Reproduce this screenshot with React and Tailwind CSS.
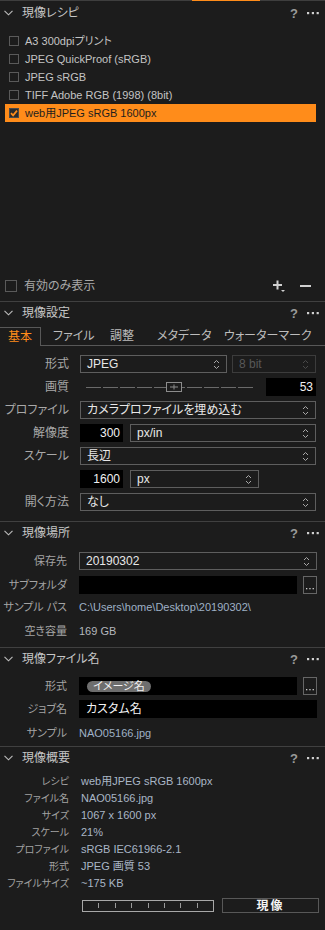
import React from "react";

const F = "font-['Liberation_Sans','Noto_Sans_CJK_JP',sans-serif] [font-feature-settings:'palt']";

function Chevron() {
  return (
    <svg width="9" height="6" viewBox="0 0 9 6" className="shrink-0">
      <polyline points="0.5,0.8 4.5,4.8 8.5,0.8" fill="none" stroke="#bdbdbd" strokeWidth="1.1" />
    </svg>
  );
}

function Dots() {
  return (
    <svg width="12" height="3" viewBox="0 0 12 3">
      <rect x="0" y="0" width="2.2" height="2.2" fill="#d0d0d0" />
      <rect x="4.8" y="0" width="2.2" height="2.2" fill="#d0d0d0" />
      <rect x="9.6" y="0" width="2.2" height="2.2" fill="#d0d0d0" />
    </svg>
  );
}

function Header({ title, tall }) {
  return (
    <div className={`flex ${tall ? "h-[24px]" : "h-[22px]"} items-center pl-[4px] pr-[6px]`}>
      <Chevron />
      <span className="ml-[9px] text-[12px] text-[#c6c6c6]">{title}</span>
      <span className="ml-auto text-[13px] font-bold leading-none text-[#9a9a9a]">?</span>
      <span className="ml-[9px] flex items-center">
        <Dots />
      </span>
    </div>
  );
}

function Divider() {
  return <div className="h-px bg-[#404040]" />;
}

function UpDown({ dim }) {
  const c = dim ? "#4a4a4a" : "#a8a8a8";
  return (
    <svg width="7" height="11" viewBox="0 0 7 11" className="ml-auto shrink-0">
      <polyline points="1,4 3.5,1.5 6,4" fill="none" stroke={c} strokeWidth="1" />
      <polyline points="1,7 3.5,9.5 6,7" fill="none" stroke={c} strokeWidth="1" />
    </svg>
  );
}

function Select({ children, className = "", dim }) {
  return (
    <div
      className={`flex h-[18px] items-center border pl-[6px] pr-[6px] text-[12px] ${
        dim ? "border-[#3c3c3c] text-[#585858]" : "border-[#5e5e5e] text-[#e8e8e8]"
      } ${className}`}
    >
      <span className="leading-none">{children}</span>
      <UpDown dim={dim} />
    </div>
  );
}

function Box({ checked, size }) {
  if (checked) {
    return (
      <div className="flex h-[10px] w-[10px] shrink-0 items-center justify-center border border-[#4a4a4a] bg-[#2b2b2b]">
        <svg width="8" height="8" viewBox="0 0 8 8">
          <path d="M1 4.2 L3.1 6.4 L7 1.6" fill="none" stroke="#ff8c1a" strokeWidth="1.7" />
        </svg>
      </div>
    );
  }
  return <div className={`${size === "lg" ? "h-[12px] w-[12px]" : "h-[10px] w-[10px]"} shrink-0 border border-[#5a5a5a]`} />;
}

function RecipeItem({ label, checked }) {
  return (
    <div
      className={`flex h-[18px] items-center pl-[4px] text-[11px] ${
        checked ? "bg-[#ff8c1a] text-[#1e1e1e]" : "text-[#c4c4c4]"
      }`}
    >
      <Box checked={checked} />
      <span className="ml-[6px] leading-none">{label}</span>
    </div>
  );
}

function SetRow({ label, children, className = "" }) {
  return (
    <div className={`flex h-[18px] items-center ${className}`}>
      <div className="w-[69px] shrink-0 text-right text-[12px] leading-none text-[#a8a8a8]">{label}</div>
      <div className="ml-[11px] flex flex-1 items-center">{children}</div>
    </div>
  );
}

function BlackInput({ children, className = "" }) {
  return (
    <div className={`flex h-[18px] items-center justify-end bg-black pr-[3px] text-[12px] leading-none text-[#f0f0f0] ${className}`}>
      {children}
    </div>
  );
}

function Slider() {
  const segs = [0, 1, 2, 3, 4, 5, 6, 7, 8, 9];
  return (
    <div className="relative ml-[6px] flex h-[18px] flex-1 items-center">
      <div className="flex w-full gap-[2px]">
        {segs.map((s) => (
          <div key={s} className="h-px flex-1 bg-[#6a6a6a]" />
        ))}
      </div>
      <div className="absolute left-[80px] top-[4px] flex h-[10px] w-[16px] items-center justify-center border border-[#8c8c8c] bg-[#1c1c1c]">
        <svg width="8" height="6" viewBox="0 0 8 6">
          <path d="M0 3 H8 M4 0.5 V5.5" stroke="#8c8c8c" strokeWidth="1" />
        </svg>
      </div>
    </div>
  );
}

function LocRow({ label, children, className = "" }) {
  return (
    <div className={`flex h-[18px] items-center ${className}`}>
      <div className="w-[67px] shrink-0 text-right text-[11px] leading-none text-[#a4a4a4]">{label}</div>
      <div className="ml-[12px] flex flex-1 items-center">{children}</div>
    </div>
  );
}

function MoreBtn() {
  return (
    <div className="ml-[6px] flex h-[18px] w-[14px] shrink-0 items-end justify-center border border-[#666] pb-[3px]">
      <svg width="8" height="2" viewBox="0 0 8 2">
        <rect x="0" y="0" width="1.3" height="1.3" fill="#cfcfcf" />
        <rect x="3.3" y="0" width="1.3" height="1.3" fill="#cfcfcf" />
        <rect x="6.6" y="0" width="1.3" height="1.3" fill="#cfcfcf" />
      </svg>
    </div>
  );
}

function SumRow({ label, value }) {
  return (
    <div className="flex h-[17px] items-center">
      <div className="w-[69px] shrink-0 text-right text-[10px] leading-none text-[#a2a2a2]">{label}</div>
      <div className="ml-[12px] text-[11px] leading-none text-[#a9b6c6]">{value}</div>
    </div>
  );
}

export default function App() {
  return (
    <div className={`h-[930px] w-[325px] overflow-hidden bg-[#1c1c1c] ${F}`}>
      <div className="flex h-px">
        <div className="w-[192px] bg-[#3e3e3e]" />
        <div className="w-[68px] bg-[#ff8c1a]" />
        <div className="flex-1 bg-[#3e3e3e]" />
      </div>

      {/* 現像レシピ */}
      <Header title="現像レシピ" tall />
      <div className="h-[252px] pl-[5px] pr-[9px] pt-[7px]">
        <RecipeItem label="A3 300dpiプリント" />
        <RecipeItem label="JPEG QuickProof (sRGB)" />
        <RecipeItem label="JPEG sRGB" />
        <RecipeItem label="TIFF Adobe RGB (1998) (8bit)" />
        <RecipeItem label="web用JPEG sRGB 1600px" checked />
      </div>
      <div className="flex h-[18px] items-center pl-[5px] pr-[14px]">
        <Box size="lg" />
        <span className="ml-[7px] text-[12px] leading-none text-[#a8a8a8]">有効のみ表示</span>
        <svg width="12" height="12" viewBox="0 0 12 12" className="ml-auto">
          <path d="M4.5 0.5 V9.5 M0 5 H9" stroke="#d0d0d0" strokeWidth="2" />
          <path d="M8 10 H12 L10 12 Z" fill="#d0d0d0" />
        </svg>
        <svg width="11" height="3" viewBox="0 0 11 3" className="ml-[15px]">
          <rect x="0" y="0" width="11" height="2" fill="#d0d0d0" />
        </svg>
      </div>
      <div className="h-[6px]" />
      <Divider />

      {/* 現像設定 */}
      <Header title="現像設定" />
      <div className="mt-[3px] flex h-[19px] text-[12px] leading-none">
        <div className="flex w-[41px] items-center justify-center border-r border-t border-[#585858] text-[#ff8c1a]">基本</div>
        <div className="flex flex-1 items-center border-b border-[#585858] text-[#bdbdbd]">
          <span className="w-[69px] pl-[12px]">ファイル</span>
          <span className="w-[47px]">調整</span>
          <span className="w-[67px]">メタデータ</span>
          <span>ウォーターマーク</span>
        </div>
      </div>
      <div className="flex flex-col gap-[5px] pr-[9px] pt-[9px]">
        <SetRow label="形式">
          <Select className="w-[147px]">JPEG</Select>
          <Select className="ml-[5px] flex-1" dim>8 bit</Select>
        </SetRow>
        <SetRow label="画質">
          <Slider />
          <BlackInput className="ml-[13px] w-[50px]">53</BlackInput>
        </SetRow>
        <SetRow label="プロファイル">
          <Select className="flex-1">カメラプロファイルを埋め込む</Select>
        </SetRow>
        <SetRow label="解像度">
          <BlackInput className="w-[43px]">300</BlackInput>
          <Select className="ml-[7px] flex-1">px/in</Select>
        </SetRow>
        <SetRow label="スケール">
          <Select className="flex-1">長辺</Select>
        </SetRow>
        <SetRow label="">
          <BlackInput className="w-[43px]">1600</BlackInput>
          <Select className="ml-[7px] w-[129px]">px</Select>
        </SetRow>
        <SetRow label="開く方法">
          <Select className="flex-1">なし</Select>
        </SetRow>
      </div>
      <div className="h-[10px]" />
      <Divider />

      {/* 現像場所 */}
      <Header title="現像場所" />
      <div className="pr-[8px] pt-[8px]">
        <LocRow label="保存先">
          <Select className="flex-1">20190302</Select>
        </LocRow>
        <LocRow label="サブフォルダ" className="mt-[6px]">
          <div className="h-[18px] flex-1 bg-black" />
          <MoreBtn />
        </LocRow>
        <LocRow label="サンプル パス" className="mt-[4px]">
          <span className="text-[11px] leading-none text-[#9fb1c6]">C:\Users\home\Desktop\20190302\</span>
        </LocRow>
        <LocRow label="空き容量" className="mt-[6px]">
          <span className="text-[11px] leading-none text-[#b4b8bd]">169 GB</span>
        </LocRow>
      </div>
      <div className="h-[7px]" />
      <Divider />

      {/* 現像ファイル名 */}
      <Header title="現像ファイル名" />
      <div className="pr-[8px] pt-[7px]">
        <LocRow label="形式">
          <div className="flex h-[18px] flex-1 items-center bg-black pl-[8px]">
            <div className="flex h-[11px] w-[64px] items-center justify-center rounded-full bg-[#6e6e6e] text-[11px] leading-none text-[#f2f2f2]">
              イメージ名
            </div>
          </div>
          <MoreBtn />
        </LocRow>
        <LocRow label="ジョブ名" className="mt-[5px]">
          <div className="flex h-[18px] flex-1 items-center bg-black pl-[7px] text-[12px] leading-none text-[#f2f2f2]">
            カスタム名
          </div>
        </LocRow>
        <LocRow label="サンプル" className="mt-[6px]">
          <span className="text-[11px] leading-none text-[#9fb1c6]">NAO05166.jpg</span>
        </LocRow>
      </div>
      <div className="h-[4px]" />
      <Divider />

      {/* 現像概要 */}
      <Header title="現像概要" />
      <div className="pt-[4px]">
        <SumRow label="レシピ" value="web用JPEG sRGB 1600px" />
        <SumRow label="ファイル名" value="NAO05166.jpg" />
        <SumRow label="サイズ" value="1067 x 1600 px" />
        <SumRow label="スケール" value="21%" />
        <SumRow label="プロファイル" value="sRGB IEC61966-2.1" />
        <SumRow label="形式" value="JPEG 画質 53" />
        <SumRow label="ファイルサイズ" value="~175 KB" />
      </div>
      <div className="mt-[6px] flex h-[15px] items-center pl-[82px] pr-[6px]">
        <div className="flex h-[12px] w-[132px] items-center justify-evenly border border-[#a8a8a8]">
          {[0, 1, 2, 3, 4, 5, 6].map((i) => (
            <div key={i} className="h-[5px] w-px bg-[#9a9a9a]" />
          ))}
        </div>
        <div className="ml-[8px] flex h-[15px] flex-1 items-center justify-center border border-[#585858] text-[12px] font-bold leading-none tracking-[2px] text-[#f4f4f4]">
          現像
        </div>
      </div>
    </div>
  );
}
